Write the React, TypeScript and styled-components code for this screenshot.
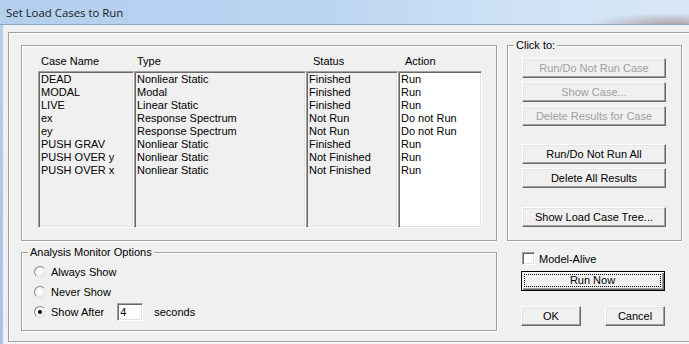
import React from "react";
import styled, { createGlobalStyle, css } from "styled-components";

const GlobalStyle = createGlobalStyle`
  html, body { margin: 0; padding: 0; background: #f0f0f0; overflow: hidden; }
  #root { width: 689px; height: 344px; }
`;

const ui = `"Liberation Sans", Arial, sans-serif`;

const etched = css`
  border: 1px solid #a0a0a0;
  box-shadow: inset 1px 1px 0 #fff, 1px 1px 0 #fff;
`;

const sunken = css`
  border-style: solid;
  border-width: 1px;
  border-color: #a0a0a0 #fff #fff #a0a0a0;
  box-shadow: inset 1px 1px 0 #696969, inset -1px -1px 0 #e3e3e3;
`;

const Window = styled.div`
  width: 689px;
  height: 344px;
  display: flex;
  flex-direction: column;
  overflow: hidden;
  font-family: ${ui};
  font-size: 11px;
  color: #000;
`;

const TitleBar = styled.div`
  height: 24px;
  flex: none;
  display: flex;
  align-items: center;
  padding-left: 6px;
  font-family: "Open Sans", "Noto Sans", sans-serif;
  font-size: 11.4px;
  color: #1a1a1a;
  background: radial-gradient(ellipse 80px 12px at 670px 25px, rgba(140, 100, 100, 0.55), rgba(140, 100, 100, 0)),
    linear-gradient(to right, #b3cfee 0%, #bad4f1 45%, #cfe2f6 75%, #d8e7f5 100%);
  border-bottom: 1px solid #8ea4be;
`;

const Frame = styled.div`
  flex: 1;
  display: flex;
  min-height: 0;
`;

const FrameEdge = styled.div`
  width: 3px;
  flex: none;
  background: linear-gradient(#b6cfec, #a8c3e5);
`;

const Client = styled.div`
  flex: 1;
  min-width: 0;
  padding: 7px 0 0 5px;
  background: #f0f0f0;
  overflow: hidden;
`;

const OuterPanel = styled.div`
  ${etched};
  width: 700px;
  box-sizing: border-box;
  display: grid;
  grid-template-columns: 476px 175px;
  grid-template-rows: 196px 79px;
  column-gap: 10px;
  row-gap: 11px;
  padding: 12px 0 10px 12px;
`;

const ListFrame = styled.div`
  ${etched};
  box-sizing: border-box;
  padding: 9px 0 0 16px;
`;

const cols = "96px 172px 92px 84px";

const HeaderRow = styled.div`
  display: grid;
  grid-template-columns: ${cols};
  height: 13px;
  line-height: 13px;
  margin-bottom: 3px;
`;

const HeadCell = styled.div<{ $indent: number }>`
  padding-left: ${(p) => p.$indent}px;
  white-space: nowrap;
`;

const ListRow = styled.div`
  display: grid;
  grid-template-columns: ${cols};
  height: 157px;
`;

const ListCol = styled.div<{ $white?: boolean }>`
  ${sunken};
  box-sizing: border-box;
  background: ${(p) => (p.$white ? "#fff" : "#f0f0f0")};
  padding: 1px 0 0 2px;
  overflow: hidden;
`;

const Item = styled.div`
  height: 13px;
  line-height: 13px;
  white-space: nowrap;
`;

const Group = styled.div`
  ${etched};
  box-sizing: border-box;
  display: flex;
  flex-direction: column;
`;

const Legend = styled.div`
  align-self: flex-start;
  margin: -7px 0 0 6px;
  padding: 0 2px;
  height: 13px;
  line-height: 13px;
  background: #f0f0f0;
  white-space: nowrap;
`;

const ButtonStack = styled.div`
  display: flex;
  flex-direction: column;
  padding: 6px 0 0 14px;
`;

const Button = styled.button<{ $w: number; $disabled?: boolean; $gap?: number }>`
  width: ${(p) => p.$w}px;
  height: 20px;
  flex: none;
  box-sizing: border-box;
  margin: ${(p) => p.$gap ?? 0}px 0 0 0;
  padding: 0;
  font-family: ${ui};
  font-size: 11px;
  color: ${(p) => (p.$disabled ? "#a0a0a0" : "#000")};
  background: #f0f0f0;
  border: 1px solid;
  border-color: #fff #696969 #696969 #fff;
  box-shadow: inset -1px -1px 0 #a0a0a0, inset 1px 1px 0 #e3e3e3;
  display: flex;
  align-items: center;
  justify-content: center;
  white-space: nowrap;
`;

const DefaultButton = styled.button`
  width: 144px;
  height: 20px;
  box-sizing: border-box;
  margin: 6px 0 0 0;
  padding: 2px 3px 3px 2px;
  font-family: ${ui};
  font-size: 11px;
  color: #000;
  background: #f0f0f0;
  border: 1px solid #000;
  box-shadow: inset 1px 1px 0 #fff, inset -1px -1px 0 #696969, inset -2px -2px 0 #a0a0a0;
  display: flex;
`;

const FocusRect = styled.span`
  flex: 1;
  border: 1px dotted #000;
  display: flex;
  align-items: center;
  justify-content: center;
  line-height: 11px;
`;

const OptionBody = styled.div`
  display: flex;
  flex-direction: column;
  padding: 3px 0 0 12px;
`;

const OptionRow = styled.label`
  height: 20px;
  display: flex;
  align-items: center;
  white-space: nowrap;
`;

const Radio = styled.span<{ $checked?: boolean }>`
  width: 12px;
  height: 12px;
  flex: none;
  box-sizing: border-box;
  border-radius: 50%;
  border: 1px solid;
  border-color: #8a8a8a #e6e6e6 #e6e6e6 #8a8a8a;
  background: radial-gradient(circle at 45% 45%, #ffffff 0%, #f6f6f6 45%, #d9d9d9 100%);
  margin-right: 5px;
  display: flex;
  align-items: center;
  justify-content: center;
  &::after {
    content: "";
    width: 4px;
    height: 4px;
    border-radius: 50%;
    background: #000;
    display: ${(p) => (p.$checked ? "block" : "none")};
  }
`;

const NumberBox = styled.span`
  ${sunken};
  width: 26px;
  height: 18px;
  box-sizing: border-box;
  background: #fff;
  margin-left: 13px;
  padding-left: 2px;
  display: flex;
  align-items: center;
`;

const Unit = styled.span`
  margin-left: 11px;
`;

const SideControls = styled.div`
  display: flex;
  flex-direction: column;
  padding-left: 14px;
`;

const CheckRow = styled.label`
  display: flex;
  align-items: center;
  height: 13px;
  padding-left: 1px;
  white-space: nowrap;
`;

const CheckBox = styled.span`
  ${sunken};
  width: 13px;
  height: 13px;
  box-sizing: border-box;
  background: #fff;
  margin-right: 4px;
`;

const DialogRow = styled.div`
  display: flex;
  gap: 24px;
  margin-top: 15px;
`;

const cases = [
  ["DEAD", "Nonliear Static", "Finished", "Run"],
  ["MODAL", "Modal", "Finished", "Run"],
  ["LIVE", "Linear Static", "Finished", "Run"],
  ["ex", "Response Spectrum", "Not Run", "Do not Run"],
  ["ey", "Response Spectrum", "Not Run", "Do not Run"],
  ["PUSH GRAV", "Nonliear Static", "Finished", "Run"],
  ["PUSH OVER y", "Nonliear Static", "Not Finished", "Run"],
  ["PUSH OVER x", "Nonliear Static", "Not Finished", "Run"],
];

const headers: [string, number][] = [
  ["Case Name", 3],
  ["Type", 3],
  ["Status", 7],
  ["Action", 7],
];

export default function App() {
  return (
    <>
      <GlobalStyle />
      <Window>
        <TitleBar>Set Load Cases to Run</TitleBar>
        <Frame>
          <FrameEdge />
          <Client>
            <OuterPanel>
              <ListFrame>
                <HeaderRow>
                  {headers.map(([h, i]) => (
                    <HeadCell key={h} $indent={i}>
                      {h}
                    </HeadCell>
                  ))}
                </HeaderRow>
                <ListRow>
                  {[0, 1, 2, 3].map((c) => (
                    <ListCol key={c} $white={c === 3}>
                      {cases.map((r, i) => (
                        <Item key={i}>{r[c]}</Item>
                      ))}
                    </ListCol>
                  ))}
                </ListRow>
              </ListFrame>

              <Group>
                <Legend>Click to:</Legend>
                <ButtonStack>
                  <Button $w={144} $disabled>Run/Do Not Run Case</Button>
                  <Button $w={144} $disabled $gap={4}>Show Case...</Button>
                  <Button $w={144} $disabled $gap={4}>Delete Results for Case</Button>
                  <Button $w={144} $gap={18}>Run/Do Not Run All</Button>
                  <Button $w={144} $gap={4}>Delete All Results</Button>
                  <Button $w={144} $gap={19}>Show Load Case Tree...</Button>
                </ButtonStack>
              </Group>

              <Group>
                <Legend>Analysis Monitor Options</Legend>
                <OptionBody>
                  <OptionRow>
                    <Radio />
                    Always Show
                  </OptionRow>
                  <OptionRow>
                    <Radio />
                    Never Show
                  </OptionRow>
                  <OptionRow>
                    <Radio $checked />
                    Show After
                    <NumberBox>4</NumberBox>
                    <Unit>seconds</Unit>
                  </OptionRow>
                </OptionBody>
              </Group>

              <SideControls>
                <CheckRow>
                  <CheckBox />
                  Model-Alive
                </CheckRow>
                <DefaultButton>
                  <FocusRect>Run Now</FocusRect>
                </DefaultButton>
                <DialogRow>
                  <Button $w={60}>OK</Button>
                  <Button $w={60}>Cancel</Button>
                </DialogRow>
              </SideControls>
            </OuterPanel>
          </Client>
        </Frame>
      </Window>
    </>
  );
}
